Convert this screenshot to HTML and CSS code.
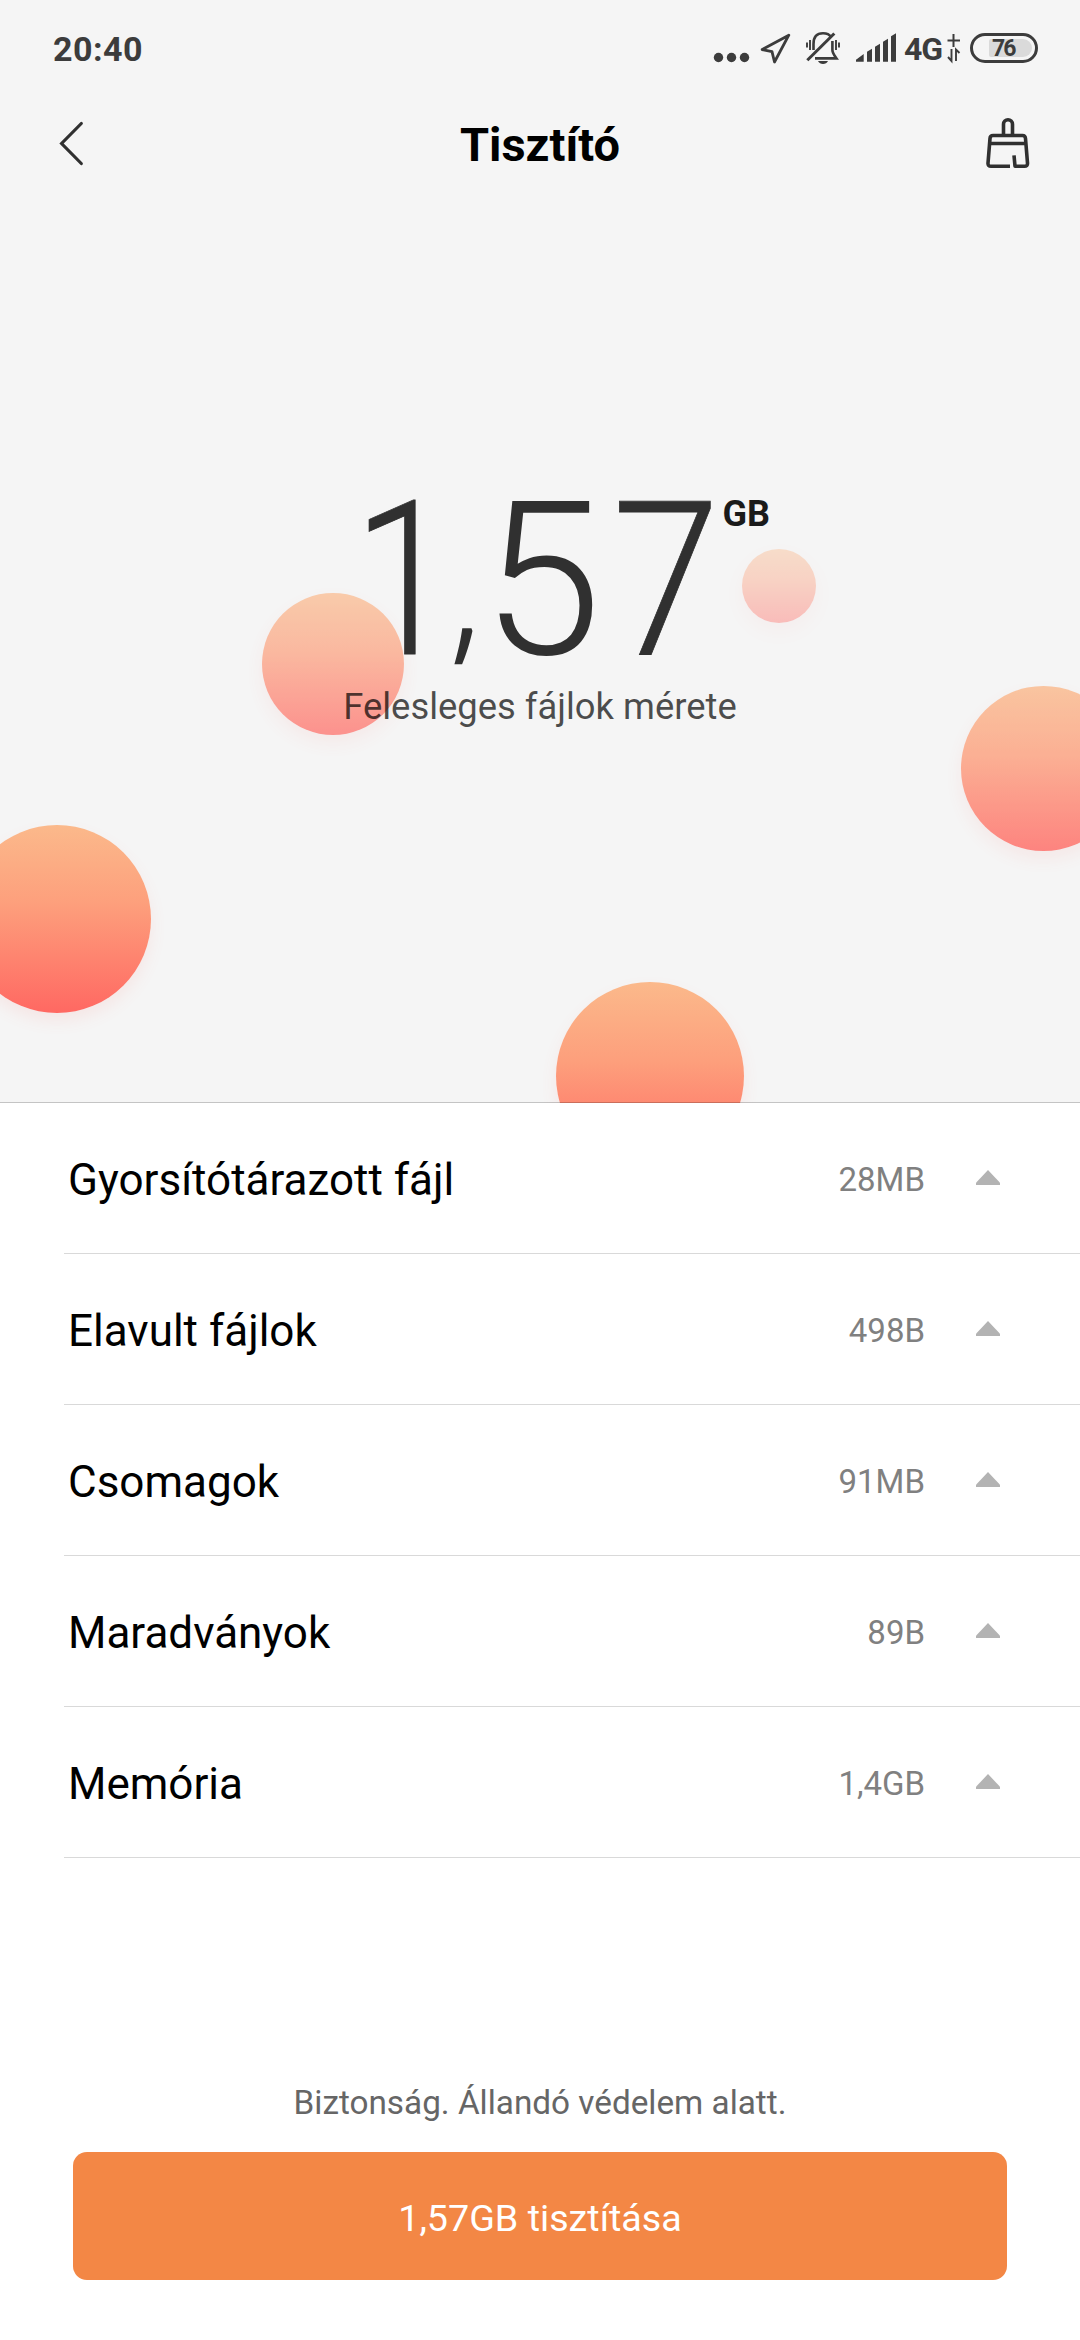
FILE: index.html
```html
<!DOCTYPE html>
<html lang="hu">
<head>
<meta charset="utf-8">
<title>Tisztító</title>
<link rel="stylesheet" href="styles.css">
</head>
<body>
<section class="hero">
  <div class="bubble bubble-left"></div>
  <div class="bubble bubble-bottom"></div>
  <div class="bubble bubble-right"></div>
  <div class="bubble bubble-center"></div>
  <div class="bubble bubble-small"></div>
  <div class="statusbar">
    <span class="time">20:40</span>
    <svg width="197" height="60" viewBox="0 0 197 60" fill="#3c3c3c">
      <circle cx="18.500" cy="37.500" r="4.700"/><circle cx="31.500" cy="37.500" r="4.700"/><circle cx="44.500" cy="37.500" r="4.700"/>
      <path d="M88.800 15.200 L62.200 29.600 L72 31.700 L74.500 42 Z" fill="none" stroke="#3c3c3c" stroke-width="2.800" stroke-linejoin="round"/>
      <g fill="none" stroke="#3c3c3c" stroke-width="2.600">
        <path d="M113.500 30V24C113.500 16.500 117.500 13.300 123 13.300C127 13.300 129.500 14.500 131 17M132.400 21V30C132.400 33 134.500 35.500 136.500 38.400H115"/>
        <path d="M107.300 40.200L134.300 13.500" stroke-width="3"/>
        <path d="M107 22.500v5M110 20v10M136 20v10M139 22.500v5" stroke-width="1.900"/>
      </g>
      <path d="M118 41h10q-1.500 2.900-5 2.900t-5-2.900z"/>
      <path d="M156 41.700v-2l7.700-5.700v7.700zM167 41.700v-10l5-3v13zM175 41.700v-15l5-3v18zM183 41.700v-20l5-3v23zM191 41.700v-25.500l5-3v28.500z"/>
    </svg>
    <span class="network">4G</span>
    <svg width="14" height="60" viewBox="0 0 14 60" fill="none" stroke="#3c3c3c" stroke-width="2">
      <path d="M.5 20.500h12.500M6.500 14v13"/>
      <path d="M4.500 29v12L1 37M9 41V29.500L12.500 33" stroke-width="1.900"/>
    </svg>
    <div class="battery"><span class="battery-level">76</span></div>
  </div>
  <header class="titlebar">
    <svg width="26" height="46" viewBox="0 0 26 46" fill="none" stroke="#303030" stroke-width="3.200" stroke-linecap="round"><path d="M23.300 2.500L3.600 22.500l19.700 20"/></svg>
    <h1 class="title">Tisztító</h1>
    <svg width="44" height="52" viewBox="0 0 44 52" fill="none" stroke="#303030" stroke-width="3.600" stroke-linejoin="round">
      <path d="M17.500 17V6.300a4.500 4.500 0 0 1 9 0V17"/>
      <path d="M24 48.200H5Q1.800 48.200 2 45.200L4 20.500q.2-3 3-3h29.500q2.800 0 3 3l2 24.700q.2 3-3 3h-9.500L28 37.300M4 25.500h35.500"/>
    </svg>
  </header>
  <div class="summary">
    <div class="amount"><span class="one">1</span><span class="comma">,</span><span class="five">5</span><span class="seven">7</span><span class="unit">GB</span></div>
    <div class="caption">Felesleges fájlok mérete</div>
  </div>
</section>
<main class="list">
  <div class="row"><span class="label">Gyorsítótárazott fájl</span><span class="value">28MB</span><i class="arrow"></i></div>
  <div class="row"><span class="label">Elavult fájlok</span><span class="value">498B</span><i class="arrow"></i></div>
  <div class="row"><span class="label">Csomagok</span><span class="value">91MB</span><i class="arrow"></i></div>
  <div class="row"><span class="label">Maradványok</span><span class="value">89B</span><i class="arrow"></i></div>
  <div class="row"><span class="label">Memória</span><span class="value">1,4GB</span><i class="arrow"></i></div>
</main>
<footer class="footer">
  <p class="note">Biztonság. Állandó védelem alatt.</p>
  <button class="clean">1,57GB tisztítása</button>
</footer>
</body>
</html>
```

FILE: styles.css
```css
* { box-sizing: border-box; }
body {
  margin: 0;
  width: 1080px;
  height: 2340px;
  display: flex;
  flex-direction: column;
  background: #fff;
  font-family: Roboto, sans-serif;
  overflow: hidden;
}
.hero {
  position: relative;
  height: 1103px;
  flex: none;
  background: #f5f5f5;
  overflow: hidden;
}
.hero::after {
  content: "";
  position: absolute;
  inset: auto 0 0;
  height: 1px;
  background: rgba(0, 0, 0, .2);
}
.statusbar, .titlebar, .summary { position: relative; }
.bubble {
  position: absolute;
  border-radius: 50%;
  background: linear-gradient(#fbb98b, #fd9f7c 42%, #ff6862);
  box-shadow: 0 8px 16px rgba(255, 104, 98, .1);
}
.bubble-left { left: -37px; top: 825px; width: 188px; height: 188px; }
.bubble-bottom { left: 556px; top: 982px; width: 188px; height: 188px; }
.bubble-right { left: 961px; top: 686px; width: 165px; height: 165px; opacity: .8; }
.bubble-center { left: 262px; top: 593px; width: 142px; height: 142px; opacity: .7; }
.bubble-small { left: 742px; top: 549px; width: 74px; height: 74px; opacity: .4; }

.statusbar {
  height: 96px;
  display: flex;
  align-items: center;
  padding: 4px 42px 0 53px;
  color: #3c3c3c;
}
.statusbar svg { flex: none; }
.time {
  margin: 0 auto 2px 0;
  font-size: 34px;
  font-weight: 700;
  line-height: 60px;
  letter-spacing: .5px;
}
.network {
  width: 43px;
  margin: 0 0 2px 7px;
  font-size: 32px;
  font-weight: 700;
  letter-spacing: -1px;
}
.battery {
  width: 68px;
  height: 30px;
  margin: 0 0 4px 9px;
  border: 3px solid #3c3c3c;
  border-radius: 15px;
  padding: 3px;
  display: flex;
}
.battery-level {
  flex: 1;
  margin-left: 13px;
  background: #dadada;
  border-radius: 2px 9px 9px 2px;
  font-size: 23px;
  font-weight: 700;
  line-height: 20px;
  letter-spacing: -2px;
  padding-left: 3px;
}
.titlebar {
  height: 96px;
  display: flex;
  align-items: center;
  justify-content: space-between;
  padding: 0 50px 0 58px;
}
.title {
  margin: 1px 0 0 10px;
  font-size: 47px;
  font-weight: 700;
  line-height: 60px;
  color: #000;
}

.summary { padding-top: 263px; text-align: center; }
.amount {
  height: 231px;
  line-height: 252px;
  display: flex;
  padding-left: 335px;
  font-size: 216px;
  font-weight: 300;
  color: #303030;
}
.one, .seven { transform-origin: 100% 50%; -webkit-text-stroke: .8px #303030; }
.one { transform: scaleX(.85); }
.seven { transform: scaleX(.9); margin-left: -2px; }
.comma {
  width: 27px;
  margin-top: 23px;
  font-family: "Open Sans", sans-serif;
  font-size: 136px;
  line-height: 230px;
  text-indent: -6px;
  -webkit-text-stroke: 2.500px #303030;
}
.unit {
  margin: 38px 0 0 3px;
  font-size: 36px;
  line-height: 42px;
  font-weight: 700;
  color: #1a1a1a;
}
.caption { font-size: 36.4px; line-height: 42px; color: rgba(0, 0, 0, .7); }

.list { padding-left: 64px; }
.row {
  height: 151px;
  display: flex;
  align-items: center;
  padding: 2px 80px 0 4px;
  border-bottom: 1px solid #d9d9d9;
}
.label { flex: 1; margin-top: 2px; font-size: 44px; color: #000; }
.value { font-size: 33px; color: #808080; }
.arrow {
  width: 24px;
  height: 15px;
  margin: 0 0 3px 51px;
  background: #b3b3b3;
  clip-path: polygon(50% 0, 100% 85%, 100% 100%, 0 100%, 0 85%);
}
.footer { margin-top: auto; padding: 0 73px 60px; text-align: center; }
.note { margin: 0 0 29px; font-size: 33.300px; line-height: 40px; color: #666; }
.clean {
  display: block;
  width: 100%;
  height: 128px;
  padding: 4px 0 0;
  border: 0;
  border-radius: 14px;
  background: #f38745;
  color: #fff;
  font: 400 37.700px Roboto, sans-serif;
}
```
